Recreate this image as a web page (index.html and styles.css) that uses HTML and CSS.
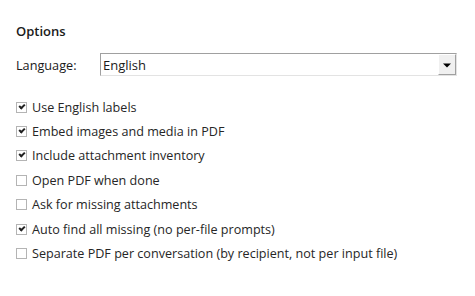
FILE: index.html
```html
<!DOCTYPE html>
<html lang="en">

<head>
    <meta charset="UTF-8">
    <title>Options</title>
    <link rel="stylesheet" href="styles.css">
</head>

<body>
    <div class="panel">
        <h2 class="title">Options</h2>

        <div class="field">
            <span class="label">Language:</span>
            <div class="select">
                <span class="value">English</span>
                <span class="arrow"></span>
            </div>
        </div>

        <ul class="checks">
            <li class="check on"><span class="box"></span>Use English labels</li>
            <li class="check on"><span class="box"></span>Embed images and media in PDF</li>
            <li class="check on"><span class="box"></span>Include attachment inventory</li>
            <li class="check"><span class="box"></span>Open PDF when done</li>
            <li class="check"><span class="box"></span>Ask for missing attachments</li>
            <li class="check on"><span class="box"></span>Auto find all missing (no per-file prompts)</li>
            <li class="check"><span class="box"></span>Separate PDF per conversation (by recipient, not per input file)</li>
        </ul>
    </div>
</body>

</html>
```

FILE: styles.css
```css
* {
    padding: 0;
    margin: 0;
    box-sizing: border-box;
}

body {
    background-color: #fff;
    font-family: "Open Sans", "Noto Sans", sans-serif;
    font-size: 12.7px;
    color: #1a1a1a;
}

.panel {
    padding: 22px 16px 0 16px;
}

.title {
    font-size: 13px;
    font-weight: 600;
    line-height: 18px;
    margin-bottom: 13px;
}

.field {
    display: flex;
    align-items: center;
    margin-bottom: 19px;
}

.label {
    width: 84px;
}

.select {
    width: 357px;
    height: 23px;
    display: flex;
    align-items: center;
    justify-content: space-between;
    border-top: 1px solid #a0a0a0;
    border-left: 1px solid #a0a0a0;
    border-right: 1px solid #e3e3e3;
    border-bottom: 1px solid #e3e3e3;
}

.value {
    padding-left: 2px;
    font-size: 13px;
}

.arrow {
    width: 18px;
    height: 21px;
    background-color: #f0f0f0;
    border: 1px solid #a0a0a0;
    border-top-color: #fff;
    border-left-color: #fff;
    position: relative;
}

/* 三角形 */
.arrow::after {
    content: "";
    position: absolute;
    left: 50%;
    top: 50%;
    transform: translate(-50%, -40%);
    border-left: 4px solid transparent;
    border-right: 4px solid transparent;
    border-top: 4px solid #000;
}

.checks {
    list-style: none;
}

.check {
    display: flex;
    align-items: center;
    height: 24.4px;
    font-size: 12.6px;
    color: #262626;
}

.box {
    width: 11px;
    height: 11px;
    border: 1px solid #b4b4b4;
    background-color: #fff;
    margin-right: 5px;
    position: relative;
}

.check.on .box::after {
    content: "";
    position: absolute;
    left: 2px;
    top: 1px;
    width: 4px;
    height: 2px;
    border-left: 2px solid #222;
    border-bottom: 2px solid #222;
    transform: rotate(-45deg);
}
```
